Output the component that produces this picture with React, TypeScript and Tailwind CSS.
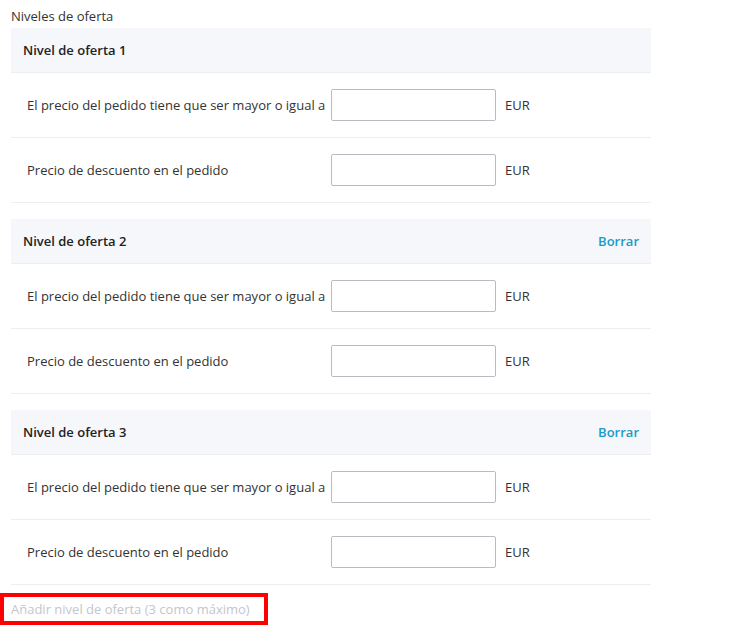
const fields = [
  'El precio del pedido tiene que ser mayor o igual a',
  'Precio de descuento en el pedido',
]

function TierBlock({ n, removable }: { n: number; removable: boolean }) {
  return (
    <div className="mb-4">
      <div className="flex h-[45px] items-center justify-between border-b border-[#eceef2] bg-[#f5f7fa] px-3">
        <span className="font-semibold text-[#222]">Nivel de oferta {n}</span>
        {removable && (
          <button type="button" className="font-semibold text-[#1a9bc9]">
            Borrar
          </button>
        )}
      </div>
      {fields.map(label => (
        <div
          key={label}
          className="flex h-[65px] items-center border-b border-[#eceef2] pl-4"
        >
          <span className="w-[304px] shrink-0">{label}</span>
          <input
            type="text"
            className="h-8 w-[165px] rounded-[2px] border border-[#b8bcc2] bg-white px-2 focus:outline-none"
          />
          <span className="ml-[9px]">EUR</span>
        </div>
      ))}
    </div>
  )
}

export default function App() {
  return (
    <div
      className="min-h-[626px] bg-white text-[13px] leading-[18px] text-[#333]"
      style={{ fontFamily: '"Open Sans", "Noto Sans", sans-serif' }}
    >
      <div className="w-[651px] pl-[11px] pt-[7px]">
        <p className="mb-[3px]">Niveles de oferta</p>
        <TierBlock n={1} removable={false} />
        <TierBlock n={2} removable />
        <TierBlock n={3} removable />
      </div>
      <div className="-mt-2 flex h-8 w-[268px] items-center border-4 border-[#ff0000] pl-[7px]">
        <span className="text-[#c4c6ca]">Añadir nivel de oferta (3 como máximo)</span>
      </div>
    </div>
  )
}
